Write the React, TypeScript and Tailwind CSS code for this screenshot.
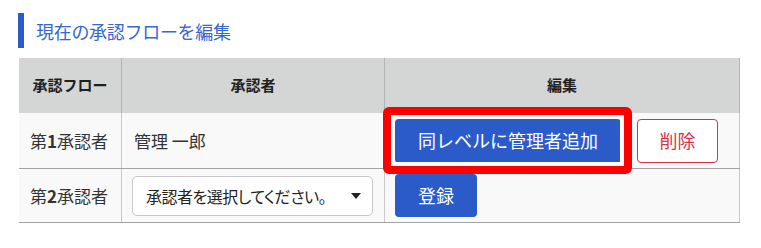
import React from "react";

const font = { fontFamily: '"Noto Sans CJK JP", "Noto Sans", sans-serif' };

function Caret() {
  return (
    <svg width="10" height="6" viewBox="0 0 10 6" aria-hidden="true">
      <path d="M0 0h10L5 6z" fill="#222" />
    </svg>
  );
}

export default function App() {
  return (
    <div className="min-h-[248px] bg-white pl-[18px] pt-[13px] text-[#333]" style={font}>
      <div className="flex h-[35px] items-center border-l-[6px] border-[#2a5bc8] pl-[12px]">
        <h2 className="text-[18px] leading-none tracking-[-0.3px] text-[#3566d2]">現在の承認フローを編集</h2>
      </div>

      <div className="ml-px mt-[10px] w-[721px]">
        <div className="grid h-[55px] grid-cols-[102px_263px_356px] bg-[#d4d5d5] text-[15px] font-bold text-[#1f1f1f]">
          <div className="flex items-center justify-center">承認フロー</div>
          <div className="flex items-center justify-center border-l border-[#b3b3b3]">承認者</div>
          <div className="flex items-center justify-center border-x border-[#b3b3b3]">編集</div>
        </div>

        <div className="grid h-[56px] grid-cols-[102px_263px_356px] border-b border-[#a3a3a3] bg-[#f9f9f9] text-[17px]">
          <div className="flex items-center pl-[11px]">
            第<span className="font-bold">1</span>承認者
          </div>
          <div className="flex items-center border-l border-[#c9c9c9] pl-[12px]">管理 一郎</div>
          <div className="flex items-center gap-4 border-x border-[#c9c9c9] pl-[10px]">
            <div className="relative">
              <button className="h-[44px] w-[226px] rounded-[4px] bg-[#2a5bc8] text-[18px] text-white">
                同レベルに管理者追加
              </button>
              <div className="pointer-events-none absolute -bottom-[11px] -left-[12px] -right-[11px] -top-[12px] rounded-[6px] border-[8px] border-[#ff0000] shadow-[inset_0_0_0_4px_#fff]" />
            </div>
            <button className="h-[44px] w-[81px] rounded-[4px] border border-[#d8334a] bg-white text-[18px] text-[#d8334a]">
              削除
            </button>
          </div>
        </div>

        <div className="grid h-[54px] grid-cols-[102px_263px_356px] border-b border-[#a3a3a3] bg-[#f9f9f9] text-[17px]">
          <div className="flex items-center pl-[11px]">
            第<span className="font-bold">2</span>承認者
          </div>
          <div className="flex items-center border-l border-[#c9c9c9] pl-[10px]">
            <div className="flex h-[40px] w-[241px] items-center justify-between rounded-[5px] border border-[#c8c8c8] bg-white pl-[13px] pr-[11px] text-[#222]">
              <span className="whitespace-nowrap text-[16px] tracking-[-0.5px] [font-feature-settings:'palt']">承認者を選択してください。</span>
              <Caret />
            </div>
          </div>
          <div className="flex items-center border-x border-[#c9c9c9] pl-[10px]">
            <button className="h-[43px] w-[82px] rounded-[4px] bg-[#2a5bc8] text-[18px] text-white">登録</button>
          </div>
        </div>
      </div>
    </div>
  );
}
